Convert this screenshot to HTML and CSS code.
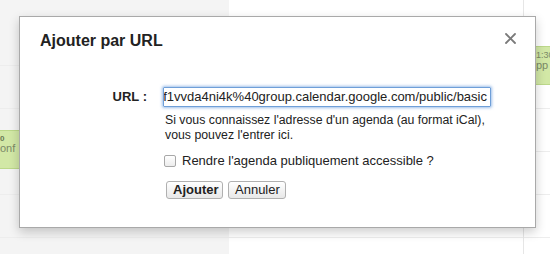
FILE: index.html
```html
<!DOCTYPE html>
<html>
<head>
    <title>Ajouter par URL</title>
    <link rel="stylesheet" href="styles.css">
</head>
<body>
    <div class="calendar">
        <div class="day-col side">
            <div class="event event-left">
                <div class="event-time">0</div>
                <div class="event-title">onf</div>
            </div>
        </div>
        <div class="day-col main">
            <div class="event event-right">
                <div class="event-time">1:30</div>
                <div class="event-title">pp</div>
            </div>
        </div>
    </div>

    <div class="dialog">
        <div class="dialog-header">
            <h1>Ajouter par URL</h1>
            <svg class="close" width="11" height="11" viewBox="0 0 11 11">
                <path d="M1 1 L10 10 M10 1 L1 10" stroke="#7a7a7a" stroke-width="1.8" stroke-linecap="round"/>
            </svg>
        </div>

        <div class="form-row">
            <label class="field-label">URL :</label>
            <div class="field">
                <div class="url-input"><span>f1vvda4ni4k%40group.calendar.google.com/public/basic</span></div>
                <p class="help">Si vous connaissez l'adresse d'un agenda (au format iCal), vous pouvez l'entrer ici.</p>
            </div>
        </div>

        <div class="form-row">
            <span></span>
            <label class="check">
                <span class="box"></span>
                Rendre l'agenda publiquement accessible ?
            </label>
        </div>

        <div class="form-row">
            <span></span>
            <div class="buttons">
                <button class="btn btn-primary">Ajouter</button>
                <button class="btn">Annuler</button>
            </div>
        </div>
    </div>
</body>
</html>
```

FILE: styles.css
```css
* {
    margin: 0;
    padding: 0;
    box-sizing: border-box;
    font-family: 'Liberation Sans', Arial, sans-serif;
}

body {
    width: 550px;
    height: 254px;
    overflow: hidden;
    background: #fff;
    color: #222;
    position: relative;
}

/* calendar behind the dialog */
.calendar {
    display: flex;
    height: 254px;
    overflow: hidden;
}

.day-col {
    position: relative;
    background-image: repeating-linear-gradient(to bottom, transparent 0, transparent 42px, #ededed 42px, #ededed 43px);
    background-position: 0 23px;
}

.side {
    width: 229px;
    background-color: #f4f4f4;
}

.main {
    flex: 1;
    background-image:
        linear-gradient(to right, transparent 294px, #e6e6e6 294px, #e6e6e6 295px, transparent 295px),
        repeating-linear-gradient(to bottom, transparent 0, transparent 42px, #ededed 42px, #ededed 43px);
}

.event {
    position: absolute;
    background: #d2e8a6;
    border: 1px solid #bcd88a;
    border-radius: 2px;
    color: #7b8a66;
    font-size: 11px;
    line-height: 11px;
    overflow: hidden;
    white-space: nowrap;
}

.event-left {
    top: 130px;
    left: -3px;
    width: 30px;
    height: 39px;
    padding: 3px 0 0 2px;
}

.event-left .event-time {
    font-size: 8px;
    line-height: 9px;
    font-weight: bold;
    color: #6b7a55;
}

.event-right {
    top: 46px;
    left: 298px;
    width: 40px;
    height: 39px;
    padding: 3px 0 0 8px;
}

.event-right .event-time {
    font-size: 9px;
    line-height: 10px;
}

/* dialog */
.dialog {
    position: absolute;
    top: 16px;
    left: 19px;
    width: 517px;
    height: 212px;
    background: #fff;
    border: 1px solid #a9a9a9;
    box-shadow: 0 4px 10px rgba(0, 0, 0, 0.2);
    padding: 14px 20px 0 20px;
}

.dialog-header {
    display: flex;
    justify-content: space-between;
    align-items: flex-start;
    margin-bottom: 36px;
}

h1 {
    font-size: 16px;
    line-height: 20px;
    font-weight: bold;
    color: #222;
}

.close {
    margin: 2px -1px 0 0;
}

.form-row {
    display: grid;
    grid-template-columns: 108px 1fr;
    column-gap: 15px;
    font-size: 13px;
}

.field-label {
    text-align: right;
    font-weight: bold;
    line-height: 20px;
    padding-right: 1px;
}

.url-input {
    width: 328px;
    height: 20px;
    border: 1px solid #6f9fd8;
    box-shadow: 0 0 3px 1px rgba(95, 150, 220, 0.6);
    border-radius: 1px;
    display: flex;
    justify-content: flex-end;
    overflow: hidden;
    white-space: nowrap;
    padding: 0 3px;
    line-height: 18px;
    font-size: 13px;
}

.url-input span {
    flex-shrink: 0;
}

.help {
    margin-top: 6px;
    font-size: 12.3px;
    line-height: 15px;
    padding-left: 2px;
    color: #222;
    max-width: 345px;
}

.check {
    display: flex;
    align-items: center;
    gap: 6px;
    margin-top: 10px;
    padding-left: 1px;
    line-height: 16px;
}

.box {
    width: 12px;
    height: 12px;
    border: 1px solid #a8a8a8;
    border-radius: 2px;
    background: linear-gradient(#fff, #ececec);
}

.buttons {
    display: flex;
    gap: 5px;
    margin-top: 12px;
    padding-left: 3px;
}

.btn {
    height: 18px;
    padding: 0 6px;
    font-size: 13px;
    color: #222;
    background: linear-gradient(#fff, #e8e8e8);
    border: 1px solid #b0b0b0;
    border-radius: 3px;
    line-height: 16px;
}

.btn-primary {
    font-weight: bold;
    width: 57px;
}

.btn:last-child {
    width: 58px;
}
```
